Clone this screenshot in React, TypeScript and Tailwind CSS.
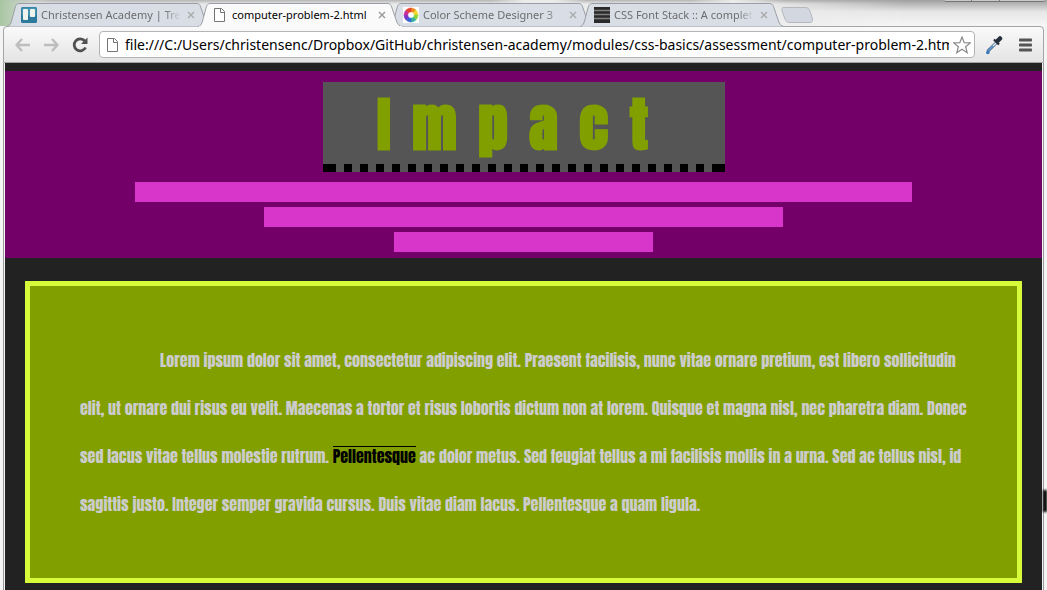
import React from "react";

const URL =
  "file:///C:/Users/christensenc/Dropbox/GitHub/christensen-academy/modules/css-basics/assessment/computer-problem-2.html";

function TrelloIcon() {
  return (
    <svg viewBox="0 0 16 16" className="size-4 shrink-0" aria-hidden="true">
      <rect width="16" height="16" rx="1.5" fill="#2d7a9c" />
      <rect x="0.5" y="0.5" width="15" height="8" rx="1.5" fill="#4492b3" />
      <rect x="2" y="2" width="5" height="11" rx="0.8" fill="#eef3ec" />
      <rect x="9" y="2" width="5" height="8" rx="0.8" fill="#eef3ec" />
    </svg>
  );
}

function PageIcon() {
  return (
    <svg viewBox="0 0 16 16" className="size-4 shrink-0" aria-hidden="true">
      <path d="M2.500 1.500H9.500L12.500 4.500V14.500H2.500Z" fill="#fff" stroke="#757575" />
      <path d="M8.500 1.500V5.500H12.500" fill="none" stroke="#757575" />
    </svg>
  );
}

function WheelIcon() {
  const colors = ["#f08a20", "#f0d82a", "#8cd63c", "#35b3a0", "#3565d8", "#7a35c8", "#c82f9c", "#ea4030"];
  return (
    <svg viewBox="0 0 16 16" className="size-4 shrink-0" aria-hidden="true">
      <rect width="16" height="16" fill="#fff" />
      {colors.map((c, i) => (
        <path key={c} d="M8 1A7 7 0 0 1 13 3.100L10.300 5.700A3.300 3.300 0 0 0 8 4.700Z" fill={c} stroke={c} strokeWidth="0.6" transform={`rotate(${i * 45} 8 8)`} />
      ))}
    </svg>
  );
}

function StackIcon() {
  return (
    <svg viewBox="0 0 16 16" className="size-4 shrink-0" aria-hidden="true">
      <rect width="16" height="16" fill="#2a2a2a" />
      <path d="M0 3.500H16M0 7.500H16M0 11.500H16" stroke="#808080" strokeWidth="1.300" />
    </svg>
  );
}

type TabProps = { title: string; icon: React.ReactNode; active?: boolean };

function Tab({ title, icon, active = false }: TabProps) {
  return (
    <div className={active ? "relative z-10 -mr-3.5 h-6 w-[205px] shrink" : "relative -mr-3.5 h-6 w-[205px] shrink"}>
      <svg viewBox="0 0 205 24" preserveAspectRatio="none" className="absolute inset-0 size-full" aria-hidden="true">
        <path
          d="M0 23.500C3 23 3.500 21 4.500 18L8 5C9 1.500 10 .5 13 .5H189C192 .5 193 1.500 194 5L198.500 18C199.500 21 201 23.500 204.500 23.500"
          fill={active ? "#fafafa" : "#d9dee6"}
          stroke="#9b9fa5"
        />
        {active && <path d="M1 23.500H204" stroke="#fafafa" />}
      </svg>
      <div className="relative flex h-full items-center gap-1 pl-3.5 pr-[15px]">
        {icon}
        <a
          href="#top"
          className={
            active
              ? "min-w-0 flex-1 overflow-hidden whitespace-nowrap text-[11px] leading-4 text-black"
              : "min-w-0 flex-1 overflow-hidden whitespace-nowrap text-[11px] leading-4 text-[#6c6c70] [mask-image:linear-gradient(to_right,black_88%,transparent)]"
          }
        >
          {title}
        </a>
        <button type="button" aria-label={`Close ${title}`} className="flex w-3 shrink-0 justify-center">
          <svg viewBox="0 0 8 8" className="size-2">
            <path d="M1 1L7 7M7 1L1 7" stroke={active ? "#999" : "#aaa"} strokeWidth="1.4" />
          </svg>
        </button>
      </div>
    </div>
  );
}

function TabStrip() {
  return (
    <div className="relative flex h-[26px] bg-linear-to-r from-[#a8c5a2] from-0% via-[#e6e7e8] via-4% to-[#eeeeee] pt-[3px] pl-[7px] font-['Noto_Sans','Open_Sans',sans-serif]">
      <div className="absolute inset-x-0 top-0 h-1 bg-linear-to-b from-[#b4b4b4] to-transparent [mask-image:linear-gradient(to_right,transparent,black_5%,black_47%,transparent_50%,transparent_53%,black_56%,black_66%,transparent_70%,black_75%)]" />
      <div className="absolute top-0 right-0 h-full w-72 bg-linear-to-b from-[#a0a0a0] via-[#e6e6e6] via-45% to-[#f6f6f6] [mask-image:linear-gradient(to_right,transparent,black_50%)]" />
      <Tab title="Christensen Academy | Trello" icon={<TrelloIcon />} />
      <Tab title="computer-problem-2.html" icon={<PageIcon />} active />
      <Tab title="Color Scheme Designer 3" icon={<WheelIcon />} />
      <Tab title="CSS Font Stack :: A complete collection" icon={<StackIcon />} />
      <button type="button" aria-label="New tab" className="relative mt-1 ml-2.5 h-4 w-8">
        <svg viewBox="0 0 32 16" className="size-full">
          <path d="M3 .5H24C27 .5 28 1.500 29 4L31.500 12C32 14.500 31 15.500 29 15.500H9C6 15.500 5 14.500 4 12L1 4C.3 2 1 .5 3 .5Z" fill="#d3d8e0" stroke="#b5b8bd" />
        </svg>
      </button>
      <div className="absolute top-0 right-0.5 flex h-0.5 w-[101px] divide-x divide-[#777] rounded-b border-b border-[#777] bg-[#c8c8c8]">
        <span className="w-7" />
        <span className="w-7" />
        <span className="flex-1" />
      </div>
    </div>
  );
}

function Toolbar() {
  return (
    <div className="mx-[3px] flex h-[37px] items-center rounded-t border border-[#a5a5a5] bg-linear-to-b from-[#fafafa] to-[#e4e4e4] pr-2.5 pl-2.5">
      <button type="button" aria-label="Back" className="mr-3">
        <svg viewBox="0 0 17 16" className="h-4 w-[17px]" fill="none" stroke="#bdbdbd" strokeWidth="2.4">
          <path d="M8 2L2.500 8L8 14M2.500 8H16" strokeLinejoin="round" />
        </svg>
      </button>
      <button type="button" aria-label="Forward" className="mr-3">
        <svg viewBox="0 0 17 16" className="h-4 w-[17px]" fill="none" stroke="#bdbdbd" strokeWidth="2.400">
          <path d="M9 2L14.500 8L9 14M14.500 8H1" strokeLinejoin="round" />
        </svg>
      </button>
      <button type="button" aria-label="Reload" className="mr-[11px]">
        <svg viewBox="0 0 16 16" className="size-4">
          <path d="M12.800 4A6 6 0 1 0 13.600 10.500" fill="none" stroke="#505050" strokeWidth="2.800" />
          <path d="M15.500 .5V7H9Z" fill="#505050" />
        </svg>
      </button>
      <div className="flex h-[27px] min-w-0 flex-1 items-center rounded-sm border border-[#b4b4b4] bg-white pr-[3px] pl-[5px]">
        <PageIcon />
        <input
          aria-label="Address"
          defaultValue={URL}
          className="ml-1 h-5 min-w-0 flex-1 bg-transparent font-['Noto_Sans','Open_Sans',sans-serif] text-[14px] leading-5 text-black outline-none"
        />
        <button type="button" aria-label="Bookmark this page" className="ml-1">
          <svg viewBox="0 0 18 18" className="size-[18px]">
            <path d="M9 1L11.200 6.600L17.300 6.900L12.600 10.700L14.200 16.700L9 13.300L3.800 16.700L5.400 10.700L.7 6.900L6.800 6.600Z" fill="#fff" stroke="#888" strokeWidth="1.200" />
          </svg>
        </button>
      </div>
      <button type="button" aria-label="Color picker" className="ml-2.5">
        <svg viewBox="0 0 18 20" className="h-5 w-[18px]">
          <path d="M12 7L5.500 13.500Q3.500 15 3 16.500" fill="none" stroke="#526b89" strokeWidth="3" />
          <path d="M11.500 7.500L8 11" fill="none" stroke="#e4eef8" strokeWidth="1.500" />
          <path d="M8 11L5 14Q3.500 15 3 16.500" fill="none" stroke="#5d9fe0" strokeWidth="1.500" />
          <path d="M9 4.500L14 9.500" stroke="#20262e" strokeWidth="2.200" />
          <path d="M12.500 6L15 3.500" stroke="#26303c" strokeWidth="4.500" strokeLinecap="round" />
          <path d="M2.800 14.500Q5 17 4.500 18.200Q3 20 1.200 18.500Q.5 17 2.800 14.500Z" fill="#3d79b8" />
        </svg>
      </button>
      <button type="button" aria-label="Menu" className="ml-4">
        <svg viewBox="0 0 14 14" className="size-3.5">
          <rect x="0" y="0.500" width="13" height="3" rx="0.800" fill="#555" />
          <rect x="0" y="5.500" width="13" height="3" rx="0.800" fill="#555" />
          <rect x="0" y="10.500" width="13" height="3" rx="0.800" fill="#555" />
        </svg>
      </button>
    </div>
  );
}

export default function App() {
  return (
    <div id="top" className="relative flex min-h-screen flex-col bg-[#f4f4f4] font-['Open_Sans','Noto_Sans',sans-serif]">
      <TabStrip />
      <Toolbar />
      <div className="mx-[3px] flex flex-1 flex-col border-x border-[#999] px-px">
        <div className="flex-1 bg-[#222222] pt-2 pb-[7px]">
          <header className="flex flex-col items-center gap-[5px] bg-[#730068] pt-[11px] pb-1.5">
            <div className="mb-[5px] w-[402px] bg-[#555555]">
              <h1 className="h-[82px] text-center font-['Impact','Anton','Roboto_Condensed',sans-serif] text-[58px] leading-[86px] font-bold tracking-[22px] text-[#829f00] [-webkit-text-stroke:1px_#829f00]">
                Impact
              </h1>
              <div className="flex h-2">
                <span className="w-[5px] bg-black" />
                <span className="flex-1 bg-[repeating-linear-gradient(to_right,black_0_8px,transparent_8px_16px)]" />
                <span className="w-[5px] bg-black" />
              </div>
            </div>
            <div className="h-5 w-3/4 bg-[#d835cb]" />
            <div className="h-5 w-1/2 bg-[#d835cb]" />
            <div className="h-5 w-1/4 bg-[#d835cb]" />
          </header>
          <main className="mx-5 mt-[23px] border-[5px] border-[#d7fb3a] bg-[#829f00] p-[50px]">
            <p className="indent-20 font-['Impact','Anton','Roboto_Condensed',sans-serif] text-[16px] leading-[48px] text-[#cccccc]">
              Lorem ipsum dolor sit amet, consectetur adipiscing elit. Praesent facilisis, nunc vitae ornare pretium, est libero sollicitudin
              elit, ut ornare dui risus eu velit. Maecenas a tortor et risus lobortis dictum non at lorem. Quisque et magna nisl, nec pharetra diam. Donec
              sed lacus vitae tellus molestie rutrum.{" "}
              <span className="inline-block border-t border-black indent-0 leading-[18px] text-black">Pellentesque</span> ac dolor metus. Sed feugiat tellus a mi facilisis mollis in a urna. Sed ac tellus nisl, id
              sagittis justo. Integer semper gravida cursus. Duis vitae diam lacus. Pellentesque a quam ligula.
            </p>
          </main>
        </div>
      </div>
      <div className="absolute top-[490px] right-0 h-[22px] w-1 bg-black blur-[1px]" />
    </div>
  );
}
